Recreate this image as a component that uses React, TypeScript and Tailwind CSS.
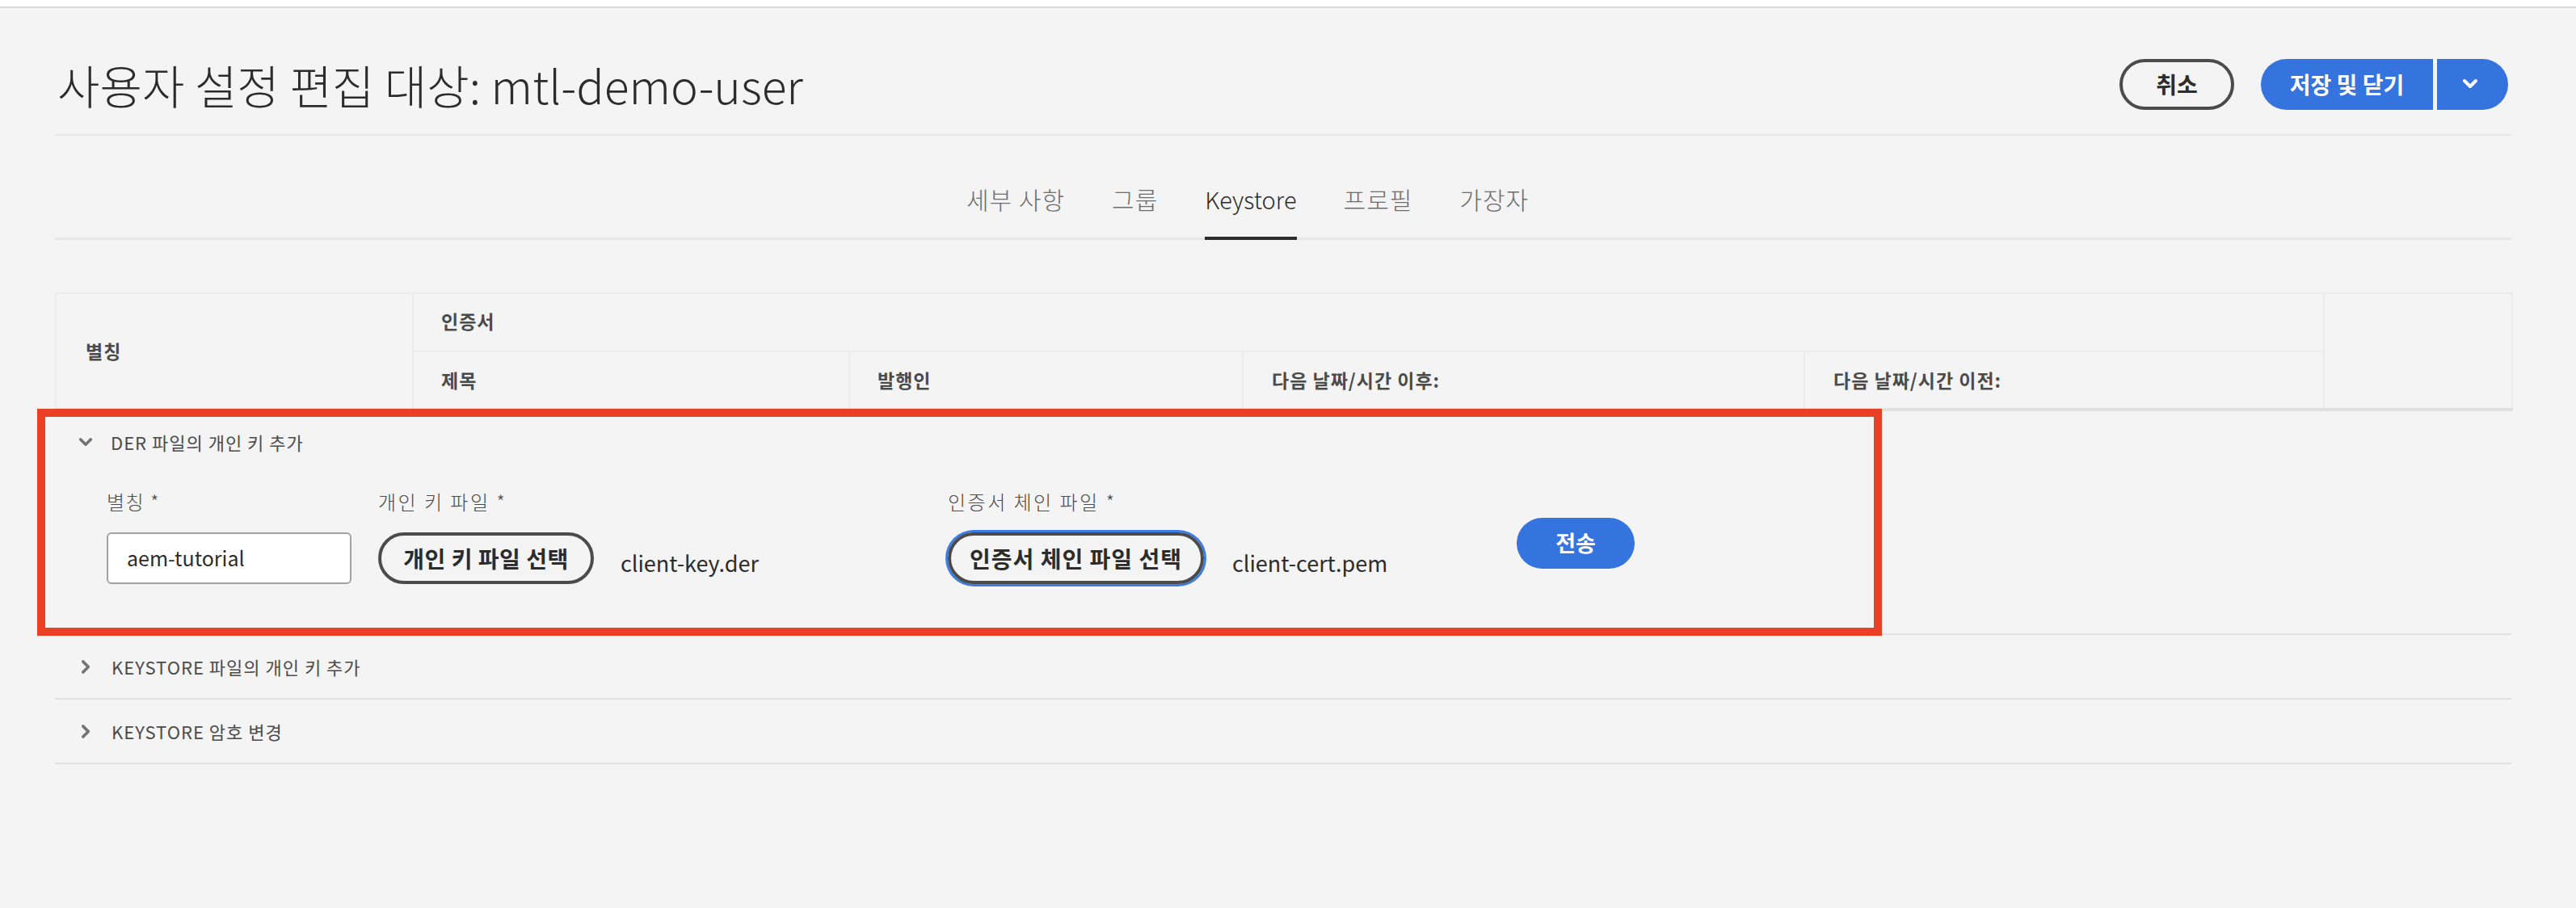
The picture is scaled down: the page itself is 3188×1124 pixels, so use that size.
import React from "react";

function ChevronDown({ className }: { className?: string }) {
  return (
    <svg viewBox="0 0 20 14" className={className} fill="none">
      <polyline points="3,3 10,10 17,3" stroke="currentColor" strokeWidth="4" strokeLinecap="round" strokeLinejoin="round" />
    </svg>
  );
}

function ChevronRight({ className }: { className?: string }) {
  return (
    <svg viewBox="0 0 14 20" className={className} fill="none">
      <polyline points="3,3 10,10 3,17" stroke="currentColor" strokeWidth="4" strokeLinecap="round" strokeLinejoin="round" />
    </svg>
  );
}

export default function App() {
  const tabs = ["세부 사항", "그룹", "Keystore", "프로필", "가장자"];
  return (
    <div className="min-h-[1124px] w-[3188px] bg-[#f4f4f4] font-['Noto_Sans_CJK_KR','Noto_Sans',sans-serif] text-[#2c2c2c]">
      <div className="h-[10px] bg-white border-b-2 border-[#dadada]" />
      <div className="pl-[68px] pr-[80px]">
        {/* Header */}
        <div className="flex items-center justify-between pt-[62px] pb-[30px] border-b-2 border-[#e6e6e6]">
          <h1 className="pl-[3px] text-[57px] leading-[64px] font-light text-[#2c2c2c]">
            사용자 설정 편집 대상: mtl-demo-user
          </h1>
          <div className="flex items-center mr-[4px]">
            <button className="w-[142px] h-[63px] rounded-full border-4 border-[#4b4b4b] text-[28px] font-bold text-[#2c2c2c] flex items-center justify-center">
              취소
            </button>
            <div className="flex ml-[33px] gap-[5px]">
              <button className="w-[213px] h-[63px] rounded-l-full bg-[#3573de] text-white text-[28px] font-bold flex items-center justify-center">
                저장 및 닫기
              </button>
              <button className="w-[88px] h-[63px] rounded-r-full bg-[#3573de] text-white flex items-center justify-center pr-[6px]">
                <ChevronDown className="w-[20px] h-[14px]" />
              </button>
            </div>
          </div>
        </div>

        {/* Tabs */}
        <div className="flex gap-[58px] pl-[1128px] border-b-[3px] border-[#e6e6e6]">
          {tabs.map((t) => (
            <div
              key={t}
              className={
                t === "Keystore"
                  ? "pt-[58px] pb-[27px] -mb-[3px] border-b-4 border-[#2c2c2c] text-[29px] leading-[40px] font-light text-[#2c2c2c]"
                  : "pt-[58px] pb-[27px] -mb-[3px] border-b-4 border-transparent text-[30px] leading-[40px] tracking-[1px] font-light text-[#6e6e6e]"
              }
            >
              {t}
            </div>
          ))}
        </div>

        {/* Table */}
        <table className="mt-[65px] w-[3040px] table-fixed border-collapse text-[23px] font-bold tracking-[1px] text-[#4b4b4b]">
          <colgroup>
            <col className="w-[442px]" />
            <col className="w-[540px]" />
            <col className="w-[487px]" />
            <col className="w-[695px]" />
            <col className="w-[643px]" />
            <col className="w-[233px]" />
          </colgroup>
          <thead>
            <tr className="h-[72px]">
              <th rowSpan={2} className="border-2 border-[#ebebeb] border-b-4 border-b-[#e0e0e0] text-left font-bold pl-[36px]">
                별칭
              </th>
              <th colSpan={4} className="border-2 border-[#ebebeb] text-left font-bold pl-[34px] pb-[4px]">
                인증서
              </th>
              <th rowSpan={2} className="border-2 border-[#ebebeb] border-b-4 border-b-[#e0e0e0]" />
            </tr>
            <tr className="h-[72px]">
              <th className="border-2 border-[#ebebeb] border-b-4 border-b-[#e0e0e0] text-left font-bold pl-[34px]">제목</th>
              <th className="border-2 border-[#ebebeb] border-b-4 border-b-[#e0e0e0] text-left font-bold pl-[34px]">발행인</th>
              <th className="border-2 border-[#ebebeb] border-b-4 border-b-[#e0e0e0] text-left font-bold pl-[35px]">다음 날짜/시간 이후:</th>
              <th className="border-2 border-[#ebebeb] border-b-4 border-b-[#e0e0e0] text-left font-bold pl-[35px]">다음 날짜/시간 이전:</th>
            </tr>
          </thead>
        </table>

        {/* Accordion */}
        <div className="w-[3040px]">
          <div className="relative border-b-2 border-[#e1e1e1]">
            <div className="h-[78px] flex items-center pl-[29px] pb-[2px] text-[22px] tracking-[1px] text-[#4b4b4b]">
              <ChevronDown className="w-[18px] h-[13px] text-[#747474]" />
              <span className="ml-[22px]">DER 파일의 개인 키 추가</span>
            </div>
            <div className="flex pl-[64px] pt-[19px] pb-[61px]">
              <div className="w-[303px] mr-[33px]">
                <div className="text-[24px] leading-[30px] tracking-[1.5px] font-light text-[#4b4b4b]">별칭 *</div>
                <div className="mt-[23px] h-[64px] rounded-[6px] border-2 border-[#a2a2a2] bg-white flex items-center pl-[23px] text-[25px] text-[#2c2c2c]">
                  aem-tutorial
                </div>
              </div>
              <div className="w-[705px]">
                <div className="text-[24px] leading-[30px] tracking-[2.5px] font-light text-[#4b4b4b]">개인 키 파일 *</div>
                <div className="mt-[23px] flex items-center">
                  <button className="w-[267px] h-[64px] rounded-full border-4 border-[#4b4b4b] text-[28px] font-bold tracking-[0.5px] text-[#2c2c2c] flex items-center justify-center">
                    개인 키 파일 선택
                  </button>
                  <span className="ml-[33px] pt-[12px] text-[27px] text-[#2c2c2c]">client-key.der</span>
                </div>
              </div>
              <div className="w-[704px]">
                <div className="text-[24px] leading-[30px] tracking-[2.5px] font-light text-[#4b4b4b]">인증서 체인 파일 *</div>
                <div className="mt-[23px] flex items-center">
                  <button className="w-[317px] h-[64px] rounded-full border-4 border-[#4b4b4b] ring-[3px] ring-[#3b7de4] text-[28px] font-bold tracking-[1px] text-[#2c2c2c] flex items-center justify-center">
                    인증서 체인 파일 선택
                  </button>
                  <span className="ml-[35px] pt-[12px] text-[27px] text-[#2c2c2c]">client-cert.pem</span>
                </div>
              </div>
              <div className="pt-[35px]">
                <button className="w-[146px] h-[63px] rounded-full bg-[#3573de] text-white text-[27px] font-bold flex items-center justify-center">
                  전송
                </button>
              </div>
            </div>
            <div className="absolute left-[-22px] top-[-3px] w-[2283px] h-[281px] border-[10px] border-[#ea4025] pointer-events-none" />
          </div>
          <div className="h-[80px] border-b-2 border-[#e1e1e1] flex items-center pl-[32px] text-[22px] tracking-[1px] text-[#4b4b4b]">
            <ChevronRight className="w-[13px] h-[19px] text-[#747474]" />
            <span className="ml-[25px]">KEYSTORE 파일의 개인 키 추가</span>
          </div>
          <div className="h-[80px] border-b-2 border-[#e1e1e1] flex items-center pl-[32px] text-[22px] tracking-[1px] text-[#4b4b4b]">
            <ChevronRight className="w-[13px] h-[19px] text-[#747474]" />
            <span className="ml-[25px]">KEYSTORE 암호 변경</span>
          </div>
        </div>
      </div>
    </div>
  );
}
